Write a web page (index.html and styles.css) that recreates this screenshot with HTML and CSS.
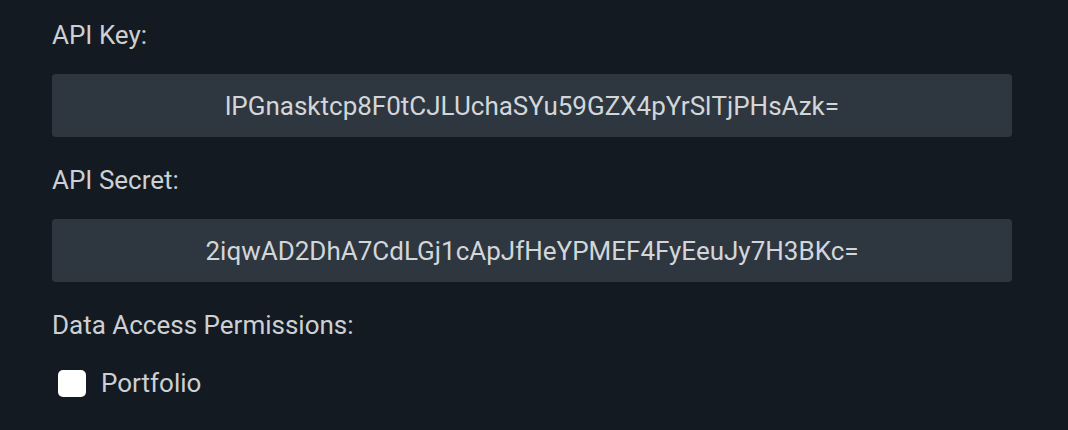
FILE: index.html
```html
<!DOCTYPE html>
<html>
<head>
<meta charset="utf-8">
<link rel="stylesheet" href="styles.css">
</head>
<body>
<div class="form">
  <div class="label">API Key:</div>
  <div class="field">lPGnasktcp8F0tCJLUchaSYu59GZX4pYrSlTjPHsAzk=</div>
  <div class="label">API Secret:</div>
  <div class="field">2iqwAD2DhA7CdLGj1cApJfHeYPMEF4FyEeuJy7H3BKc=</div>
  <div class="label">Data Access Permissions:</div>
  <label class="check"><span class="box"></span><span class="check-text">Portfolio</span></label>
</div>
</body>
</html>
```

FILE: styles.css
```css
html, body {
  margin: 0;
  padding: 0;
  background: #131a22;
  height: 100%;
}
.form {
  width: 960px;
  padding: 20px 0 0 52px;
  font-family: Roboto, "Liberation Sans", sans-serif;
  display: flex;
  flex-direction: column;
}
.label {
  font-size: 26px;
  line-height: 30px;
  color: #cdd0d3;
}
.field {
  margin: 24px 0 28px;
  height: 63px;
  border-radius: 4px;
  background: #2e3740;
  color: #d3d6d9;
  font-size: 26px;
  display: flex;
  align-items: center;
  justify-content: center;
}
.check {
  display: flex;
  align-items: center;
  gap: 15px;
  margin: 28px 0 0 6px;
}
.box {
  width: 28px;
  height: 27px;
  border-radius: 5px;
  background: #ffffff;
}
.check-text {
  font-size: 26px;
  line-height: 30px;
  color: #cdd0d3;
}
```
